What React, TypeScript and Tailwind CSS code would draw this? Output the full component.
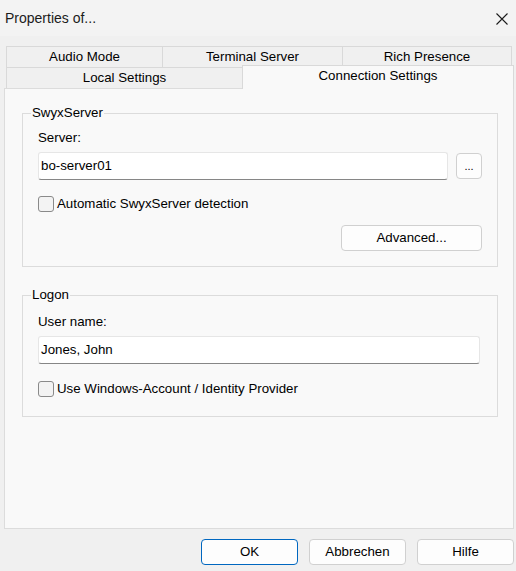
import React from 'react'

function Checkbox({ label }: { label: string }) {
  return (
    <label className="flex items-center h-[16px] gap-[3px]">
      <span className="w-[16px] h-[16px] rounded-[3px] border border-[#8a8a8a] bg-[#f3f3f3] shrink-0" />
      <span className="leading-[16px]">{label}</span>
    </label>
  )
}

function Btn({ children, className = '' }: { children: React.ReactNode; className?: string }) {
  return (
    <button
      className={`flex items-center justify-center rounded-[4px] border bg-[#fdfdfd] leading-[16px] ${className}`}
    >
      {children}
    </button>
  )
}

function TextBox({ value, className = '' }: { value: string; className?: string }) {
  return (
    <div
      className={`h-[28px] flex items-center pl-[2px] bg-white rounded-[3px] border border-[#e6e6e6] border-b-[#868686] leading-[16px] ${className}`}
    >
      {value}
    </div>
  )
}

export default function App() {
  return (
    <div className="w-[516px] h-[571px] bg-[#f0f0f0] text-[13.3px] text-black font-['Liberation_Sans',Arial,sans-serif] flex flex-col overflow-hidden">
      {/* Title bar */}
      <div className="h-[36px] bg-[#f3f3f3] flex items-center justify-between pl-[5px] pr-[8px] shrink-0">
        <span className="text-[14px] leading-[18px] text-[#1b1b1b]">Properties of...</span>
        <svg width="12" height="12" viewBox="0 0 12 12" className="mt-[1px]">
          <path d="M0.5 0.5 L11.5 11.5 M11.5 0.5 L0.5 11.5" stroke="#1b1b1b" strokeWidth="1.1" fill="none" />
        </svg>
      </div>

      {/* Tabs */}
      <div className="mt-[10px] ml-[6px] flex h-[21px] shrink-0">
        <div className="w-[157px] border border-b-0 border-[#d9d9d9] flex items-center justify-center leading-[16px]">Audio Mode</div>
        <div className="w-[181px] -ml-px border border-b-0 border-[#d9d9d9] flex items-center justify-center leading-[16px]">Terminal Server</div>
        <div className="w-[170px] -ml-px border border-b-0 border-[#d9d9d9] flex items-center justify-center leading-[16px]">Rich Presence</div>
      </div>
      <div className="ml-[6px] flex items-start h-[21px] shrink-0">
        <div className="w-[237px] h-[21px] border border-b-0 border-[#d9d9d9] flex items-center justify-center leading-[16px]">Local Settings</div>
        <div className="relative z-10 w-[272px] h-[24px] -mt-[2px] -ml-px border border-b-0 border-[#d9d9d9] bg-[#f9f9f9] flex items-center justify-center leading-[16px] pb-[3px]">
          Connection Settings
        </div>
      </div>

      {/* Panel */}
      <div className="ml-[4px] w-[510px] h-[441px] border border-[#dcdcdc] bg-[#f9f9f9] pt-[15px] shrink-0">
        <fieldset className="ml-[17px] w-[476px] border border-[#dcdcdc]">
          <legend className="ml-[8px] px-[1px] leading-[18px]">SwyxServer</legend>
          <div className="px-[15px] pb-[15px] flex flex-col">
            <div className="mt-[8px] leading-[16px]">Server:</div>
            <div className="mt-[6px] flex items-center gap-[8px]">
              <TextBox value="bo-server01" className="w-[410px]" />
              <Btn className="w-[26px] h-[26px] border-[#d0d0d0] text-[11px]">...</Btn>
            </div>
            <div className="mt-[16px]">
              <Checkbox label="Automatic SwyxServer detection" />
            </div>
            <div className="mt-[13px] flex justify-end">
              <Btn className="w-[141px] h-[26px] border-[#d0d0d0]">Advanced...</Btn>
            </div>
          </div>
        </fieldset>

        <fieldset className="mt-[19px] ml-[17px] w-[476px] border border-[#dcdcdc]">
          <legend className="ml-[8px] px-[1px] leading-[18px]">Logon</legend>
          <div className="px-[15px] pb-[19px] flex flex-col">
            <div className="mt-[10px] leading-[16px]">User name:</div>
            <TextBox value="Jones, John" className="mt-[6px] w-[442px]" />
            <div className="mt-[17px]">
              <Checkbox label="Use Windows-Account / Identity Provider" />
            </div>
          </div>
        </fieldset>
      </div>

      {/* Dialog buttons */}
      <div className="mt-[10px] flex justify-end gap-[11px] pr-[2px] shrink-0">
        <Btn className="w-[97px] h-[26px] border-[#0067c0]">OK</Btn>
        <Btn className="w-[97px] h-[26px] border-[#d0d0d0]">Abbrechen</Btn>
        <Btn className="w-[97px] h-[26px] border-[#d0d0d0]">Hilfe</Btn>
      </div>
    </div>
  )
}
